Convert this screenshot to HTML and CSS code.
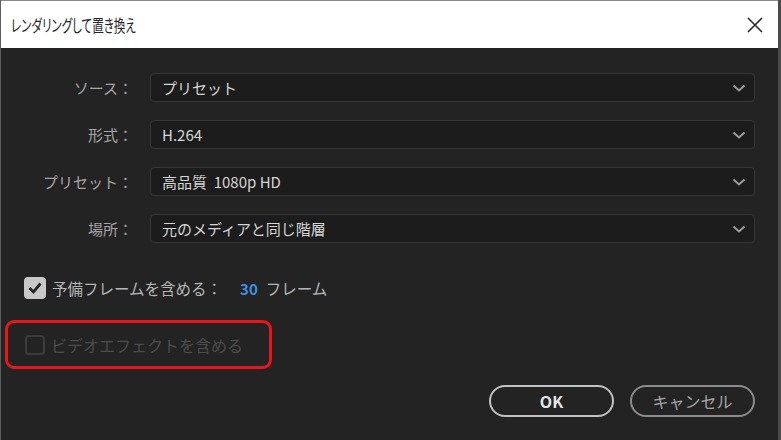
FILE: index.html
```html
<!DOCTYPE html>
<html lang="ja">
<head>
  <meta charset="UTF-8">
  <title>レンダリングして置き換え</title>
  <link rel="stylesheet" href="styles.css">
</head>
<body>
<div class="dialog">
  <!-- Title bar -->
  <div class="titlebar">
    <span class="title">レンダリングして置き換え</span>
    <svg class="close" width="18" height="18" viewBox="0 0 18 18">
      <path d="M2 2 L16 16 M16 2 L2 16" stroke="#2a2a2a" stroke-width="1.6" fill="none"/>
    </svg>
  </div>

  <!-- Form -->
  <div class="content">
    <div class="form">
      <div class="label">ソース：</div>
      <div class="select"><span>プリセット</span><svg class="chev" width="14" height="8" viewBox="0 0 14 8"><path d="M1.5 1.5 L7 6.5 L12.5 1.5" stroke="#9c9c9c" stroke-width="2" fill="none"/></svg></div>

      <div class="label">形式：</div>
      <div class="select"><span>H.264</span><svg class="chev" width="14" height="8" viewBox="0 0 14 8"><path d="M1.5 1.5 L7 6.5 L12.5 1.5" stroke="#9c9c9c" stroke-width="2" fill="none"/></svg></div>

      <div class="label">プリセット：</div>
      <div class="select"><span>高品質&nbsp; 1080p HD</span><svg class="chev" width="14" height="8" viewBox="0 0 14 8"><path d="M1.5 1.5 L7 6.5 L12.5 1.5" stroke="#9c9c9c" stroke-width="2" fill="none"/></svg></div>

      <div class="label">場所：</div>
      <div class="select"><span>元のメディアと同じ階層</span><svg class="chev" width="14" height="8" viewBox="0 0 14 8"><path d="M1.5 1.5 L7 6.5 L12.5 1.5" stroke="#9c9c9c" stroke-width="2" fill="none"/></svg></div>
    </div>

    <div class="check-row">
      <div class="checkbox checked">
        <svg width="16" height="14" viewBox="0 0 16 14"><path d="M2.5 7 L6.5 11 L13.5 2.5" stroke="#262626" stroke-width="2.8" fill="none"/></svg>
      </div>
      <span class="check-text">予備フレームを含める：</span>
      <span class="num">30</span>
      <span class="check-text">フレーム</span>
    </div>

    <div class="highlight">
      <div class="check-row disabled">
        <div class="checkbox"></div>
        <span class="check-text">ビデオエフェクトを含める</span>
      </div>
    </div>

    <div class="buttons">
      <button class="btn btn-ok">OK</button>
      <button class="btn btn-cancel">キャンセル</button>
    </div>
  </div>
</div>
</body>
</html>
```

FILE: styles.css
```css
body {
  margin: 0;
  padding: 0;
  background: #232323;
  font-family: "Noto Sans CJK JP", "Noto Sans", sans-serif;
}

.dialog {
  width: 781px;
  height: 440px;
  box-sizing: border-box;
  border-left: 1px solid #5c5c5c;
  border-right: 3px solid #4a4a4a;
  background: #232323;
  overflow: hidden;
}

/* Title bar */
.titlebar {
  height: 48px;
  box-sizing: border-box;
  border-top: 1px solid #8a8a8a;
  background: #fff;
  display: flex;
  align-items: center;
  justify-content: space-between;
  padding: 0 14px 0 10px;
}

.title {
  display: inline-block;
  font-size: 16.5px;
  color: #262626;
  font-feature-settings: "palt";
  transform: scaleX(0.7);
  transform-origin: left center;
}

/* Form */
.content {
  padding: 25px 23px 0 0;
}

.form {
  display: grid;
  grid-template-columns: 132px 1fr;
  column-gap: 17px;
  row-gap: 18px;
}

.label {
  text-align: right;
  color: #a6a6a6;
  font-size: 15px;
  line-height: 29px;
}

.select {
  height: 29px;
  box-sizing: border-box;
  border: 1px solid #363636;
  border-radius: 4px;
  background: #1c1c1c;
  display: flex;
  align-items: center;
  justify-content: space-between;
  padding: 0 8px 0 11px;
  color: #d6d6d6;
  font-size: 15px;
}

.check-row {
  display: flex;
  align-items: center;
  height: 22px;
  margin: 34px 0 0 23px;
}

.checkbox {
  width: 22px;
  height: 22px;
  box-sizing: border-box;
  border-radius: 4px;
  border: 2px solid #3c3c3c;
  margin-right: 6px;
  display: flex;
  align-items: center;
  justify-content: center;
}

.checkbox.checked {
  background: #c9c9c9;
  border-color: #c9c9c9;
}

.check-text {
  color: #b6b6b6;
  font-size: 15.5px;
}

.num {
  color: #3f8fe0;
  font-weight: bold;
  font-size: 15px;
  margin: 0 8px 0 18px;
}

/* Annotation box */
.highlight {
  width: 267px;
  height: 49px;
  box-sizing: border-box;
  margin: 21px 0 0 4px;
  border: 3px solid #e8151b;
  border-radius: 9px;
  display: flex;
  align-items: center;
}

.highlight .check-row {
  margin: 0 0 0 17px;
  height: 20px;
}

.disabled .checkbox {
  width: 20px;
  height: 20px;
}

.disabled .check-text {
  color: #4c4c4c;
  font-size: 16px;
}

/* Buttons */
.buttons {
  display: flex;
  justify-content: flex-end;
  gap: 16px;
  margin-top: 16px;
}

.btn {
  width: 125px;
  height: 32px;
  border-radius: 16px;
  background: transparent;
  font-family: "Noto Sans CJK JP", "Noto Sans", sans-serif;
  cursor: pointer;
}

.btn-ok {
  border: 2px solid #c2c2c2;
  color: #e6e6e6;
  font-weight: bold;
  font-size: 16px;
}

.btn-cancel {
  border: 2px solid #8c8c8c;
  color: #a6a6a6;
  font-size: 16px;
}
```
